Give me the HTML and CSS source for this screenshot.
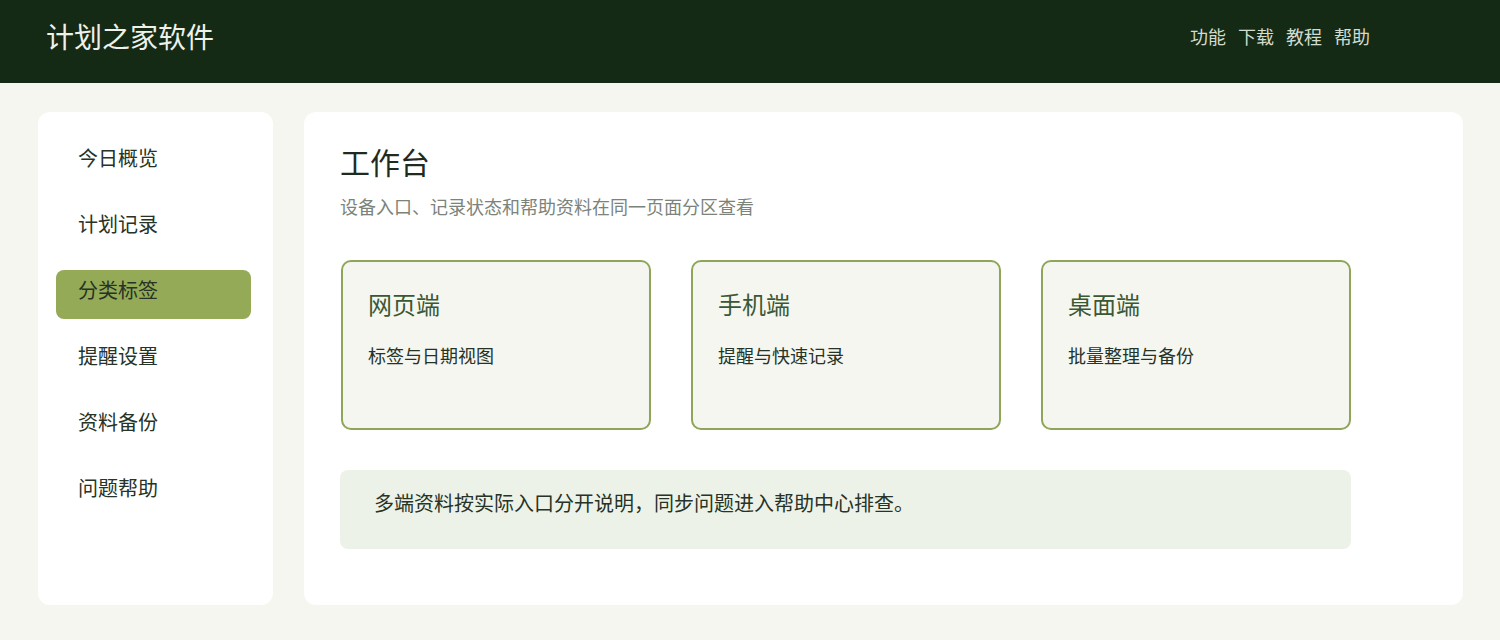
FILE: index.html
```html
<!DOCTYPE html>
<html lang="zh-CN">
<head>
    <meta charset="UTF-8">
    <meta name="viewport" content="width=device-width, initial-scale=1.0">
    <title>计划之家软件</title>
    <link rel="stylesheet" href="styles.css">
</head>
<body>
    <header class="topbar">
        <div class="brand">计划之家软件</div>
        <nav class="nav">
            <a href="#">功能</a>
            <a href="#">下载</a>
            <a href="#">教程</a>
            <a href="#">帮助</a>
        </nav>
    </header>

    <div class="layout">
        <aside class="sidebar">
            <div class="side-item">今日概览</div>
            <div class="side-item">计划记录</div>
            <div class="side-item active">分类标签</div>
            <div class="side-item">提醒设置</div>
            <div class="side-item">资料备份</div>
            <div class="side-item">问题帮助</div>
        </aside>

        <main class="main">
            <h1 class="page-title">工作台</h1>
            <p class="page-sub">设备入口、记录状态和帮助资料在同一页面分区查看</p>

            <div class="cards">
                <div class="card">
                    <h3>网页端</h3>
                    <p>标签与日期视图</p>
                </div>
                <div class="card">
                    <h3>手机端</h3>
                    <p>提醒与快速记录</p>
                </div>
                <div class="card">
                    <h3>桌面端</h3>
                    <p>批量整理与备份</p>
                </div>
            </div>

            <div class="note">多端资料按实际入口分开说明，同步问题进入帮助中心排查。</div>
        </main>
    </div>
</body>
</html>
```

FILE: styles.css
```css
body {
    margin: 0;
    padding: 0;
    background-color: #f5f6f0;
    color: #263326;
    font-family: "Noto Sans CJK SC", "Noto Sans", sans-serif;
}
.topbar {
    height: 83px;
    box-sizing: border-box;
    display: flex;
    align-items: center;
    justify-content: space-between;
    padding: 0 130px 11px 46px;
    background-color: #142a15;
}
.brand {
    font-size: 28px;
    line-height: 36px;
    color: #eef1ea;
}
.nav {
    display: flex;
    gap: 12px;
}
.nav a {
    font-size: 18px;
    line-height: 24px;
    color: #d3dccf;
    text-decoration: none;
}
.layout {
    display: flex;
    gap: 31px;
    padding: 29px 37px 35px 38px;
}
.sidebar {
    width: 235px;
    flex-shrink: 0;
    box-sizing: border-box;
    padding: 26px 22px 0 18px;
    background-color: #fff;
    border-radius: 12px;
}
.side-item {
    padding: 7px 22px 17px;
    margin-bottom: 17px;
    font-size: 20px;
    line-height: 25px;
    color: #263326;
    border-radius: 8px;
}
.side-item.active {
    background-color: #94aa56;
}
.main {
    flex: 1;
    padding: 31px 36px 56px 36px;
    background-color: #fff;
    border-radius: 12px;
}
.page-title {
    margin: 0 0 15px;
    font-size: 30px;
    line-height: 36px;
    font-weight: normal;
    color: #1f2b1f;
}
.page-sub {
    margin: 0 0 41px;
    font-size: 18px;
    line-height: 25px;
    color: #7b837a;
}
.cards {
    display: grid;
    grid-template-columns: repeat(3, 310px);
    gap: 40px;
    margin: 0 0 40px 1px;
}
.card {
    height: 170px;
    box-sizing: border-box;
    padding: 26px 25px 0;
    background-color: #f5f6f0;
    border: 2px solid #8fa55a;
    border-radius: 10px;
}
.card h3 {
    margin: 0 0 22px;
    font-size: 24px;
    line-height: 32px;
    font-weight: normal;
    color: #3b5834;
}
.card p {
    margin: 0;
    font-size: 18px;
    line-height: 26px;
    color: #263326;
}
.note {
    width: 1011px;
    height: 79px;
    box-sizing: border-box;
    padding: 19px 34px 0;
    background-color: #edf2e8;
    border-radius: 8px;
    font-size: 20px;
    line-height: 28px;
    color: #263326;
}
```
